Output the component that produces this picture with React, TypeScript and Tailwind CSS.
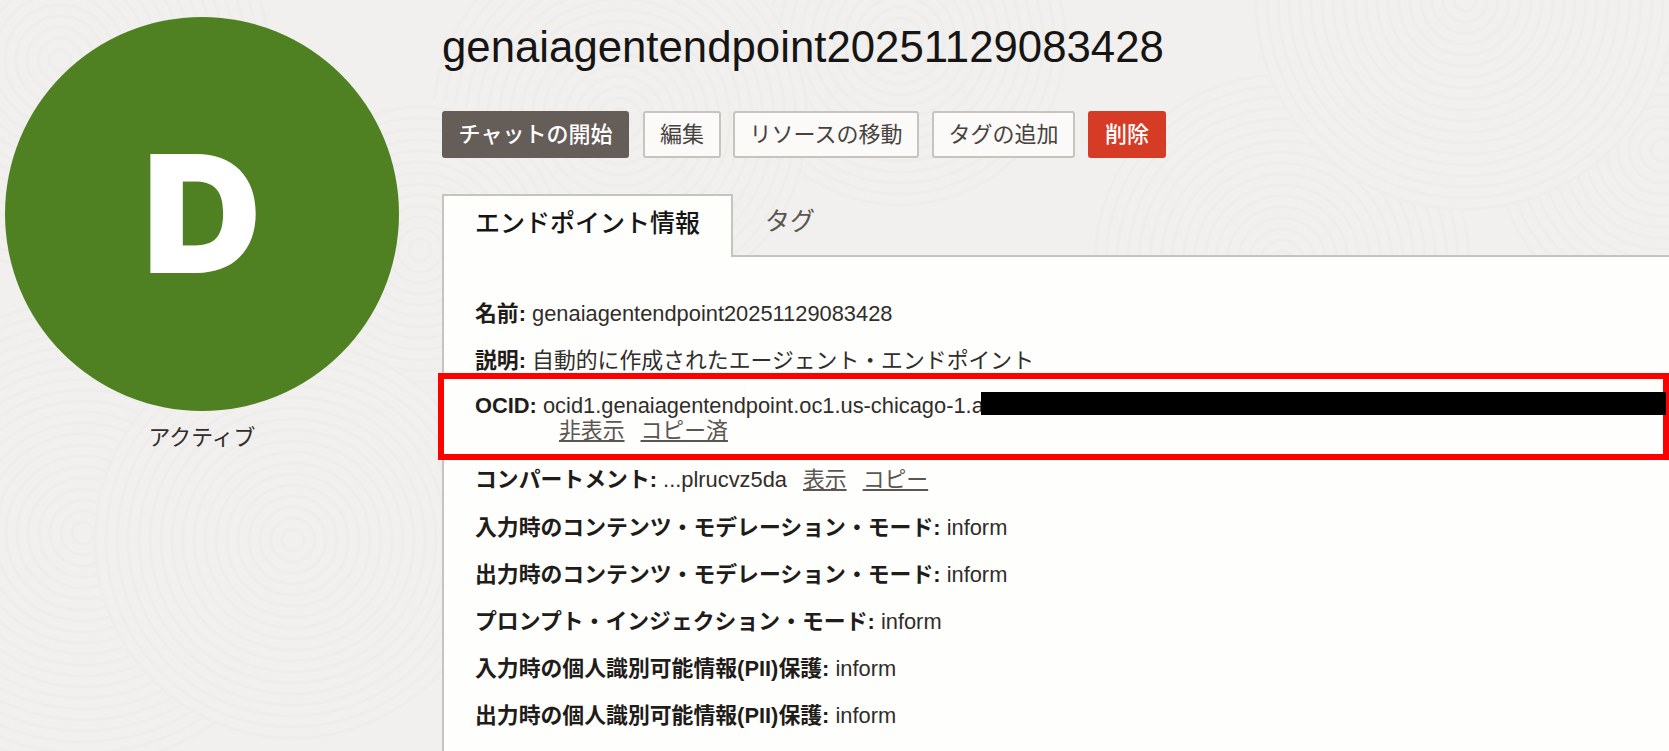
const font = { fontFamily: '"Liberation Sans", "Noto Sans CJK JP", sans-serif' };

// faint fingerprint-like rings behind the page: [cx, cy, outer radius]
const swirls = [
  [1662, 150, 170],
  [1282, 262, 190],
  [1465, 0, 210],
  [900, 40, 170],
  [620, 120, 190],
  [60, 60, 210],
  [420, 250, 150],
  [83, 533, 240],
  [293, 540, 200],
];

function Backdrop() {
  return (
    <svg className="absolute inset-0 h-full w-full" viewBox="0 0 1669 751" fill="none">
      {swirls.map(([cx, cy, r], i) => (
        <g key={i}>
          <circle cx={cx} cy={cy} r={r} fill="#f1f0ee" />
          {Array.from({ length: Math.floor(r / 11) }, (_, n) => (
            <circle key={n} cx={cx} cy={cy} r={(n + 1) * 11} stroke="#eeedeb" strokeWidth={3} />
          ))}
        </g>
      ))}
    </svg>
  );
}

function Btn({ children, kind = "default", width }: { children: React.ReactNode; kind?: "default" | "primary" | "danger"; width: string }) {
  const tone =
    kind === "primary"
      ? "bg-[#655d57] border-[#655d57] text-white font-medium"
      : kind === "danger"
        ? "bg-[#d63b25] border-[#d63b25] text-white font-medium"
        : "bg-[#fbfaf8] border-[#c7c4bf] text-[#47423e]";
  return <button className={`flex h-[47px] items-center justify-center rounded-[3px] border-2 text-[22px] ${tone} ${width}`}>{children}</button>;
}

function Row({ label, children, tall }: { label: string; children: React.ReactNode; tall?: boolean }) {
  return (
    <div className={`${tall ? "h-[48px]" : "h-[47px]"} leading-[47px] whitespace-nowrap`}>
      <b className="font-bold text-[#1f1c1a]">{label}:</b> {children}
    </div>
  );
}

function Link({ children }: { children: React.ReactNode }) {
  return <a className="ml-[16px] text-[#5b5652] underline underline-offset-2">{children}</a>;
}

export default function App() {
  return (
    <div style={font} className="relative h-[751px] w-[1669px] overflow-hidden bg-[#f1f0ee] text-[21.85px] text-[#312d2a]">
      <Backdrop />
      <div className="relative flex h-full">
        <div className="flex w-[442px] shrink-0 flex-col pl-[5px] pt-[17px]">
          <div className="flex h-[394px] w-[394px] items-center justify-center rounded-full bg-[#4f8122] font-['Inter'] text-[164px] font-black text-white">D</div>
          <div className="mt-[11px] w-[394px] text-center text-[#312d2a]">アクティブ</div>
        </div>
        <div className="flex min-w-0 flex-1 flex-col">
          <h1 className="pt-[22px] text-[43.75px] leading-[50px] text-[#161513]">genaiagentendpoint20251129083428</h1>
          <div className="mt-[39px] flex">
            <Btn kind="primary" width="w-[187px]">チャットの開始</Btn>
            <div className="w-[14px]" />
            <Btn width="w-[78px]">編集</Btn>
            <div className="w-[12px]" />
            <Btn width="w-[186px]">リソースの移動</Btn>
            <div className="w-[13px]" />
            <Btn width="w-[143px]">タグの追加</Btn>
            <div className="w-[13px]" />
            <Btn kind="danger" width="w-[78px]">削除</Btn>
          </div>
          <div className="mt-[36px] flex h-[63px] items-stretch">
            <div className="z-10 flex h-[63px] w-[291px] items-center justify-center border-2 border-b-0 border-[#c7c4bf] bg-[#fefefc] pb-[5px] text-[25px] font-medium text-[#161513]">
              エンドポイント情報
            </div>
            <div className="flex flex-1 items-center border-b-2 border-[#c7c4bf] pb-[5px] pl-[32px] text-[25px] text-[#5b5652]">タグ</div>
          </div>
          <div className="flex-1 border-l-2 border-[#c7c4bf] bg-[#fefefc] pl-[31px] pt-[33px]">
            <Row label="名前">genaiagentendpoint20251129083428</Row>
            <Row label="説明">自動的に作成されたエージェント・エンドポイント</Row>
            <div className="h-[47px] leading-[43px] whitespace-nowrap">
              <b className="font-bold text-[#1f1c1a]">OCID:</b> ocid1.genaiagentendpoint.oc1.us-chicago-1.a
            </div>
            <div className="-mt-[12px] h-[37px] whitespace-nowrap pl-[84px] leading-[24px]">
              <a className="text-[#5b5652] underline underline-offset-2">非表示</a>
              <Link>コピー済</Link>
            </div>
            <Row label="コンパートメント" tall>
              ...plrucvz5da
              <Link>表示</Link>
              <Link>コピー</Link>
            </Row>
            <Row label="入力時のコンテンツ・モデレーション・モード">inform</Row>
            <Row label="出力時のコンテンツ・モデレーション・モード">inform</Row>
            <Row label="プロンプト・インジェクション・モード">inform</Row>
            <Row label="入力時の個人識別可能情報(PII)保護">inform</Row>
            <Row label="出力時の個人識別可能情報(PII)保護">inform</Row>
          </div>
        </div>
      </div>
      {/* annotation: red box and redaction over the OCID */}
      <div className="absolute left-[438px] top-[373px] h-[87px] w-[1231px] border-[6px] border-[#ff0000]" />
      <div className="absolute left-[981px] top-[392px] h-[23px] w-[685px] bg-black" />
    </div>
  );
}
